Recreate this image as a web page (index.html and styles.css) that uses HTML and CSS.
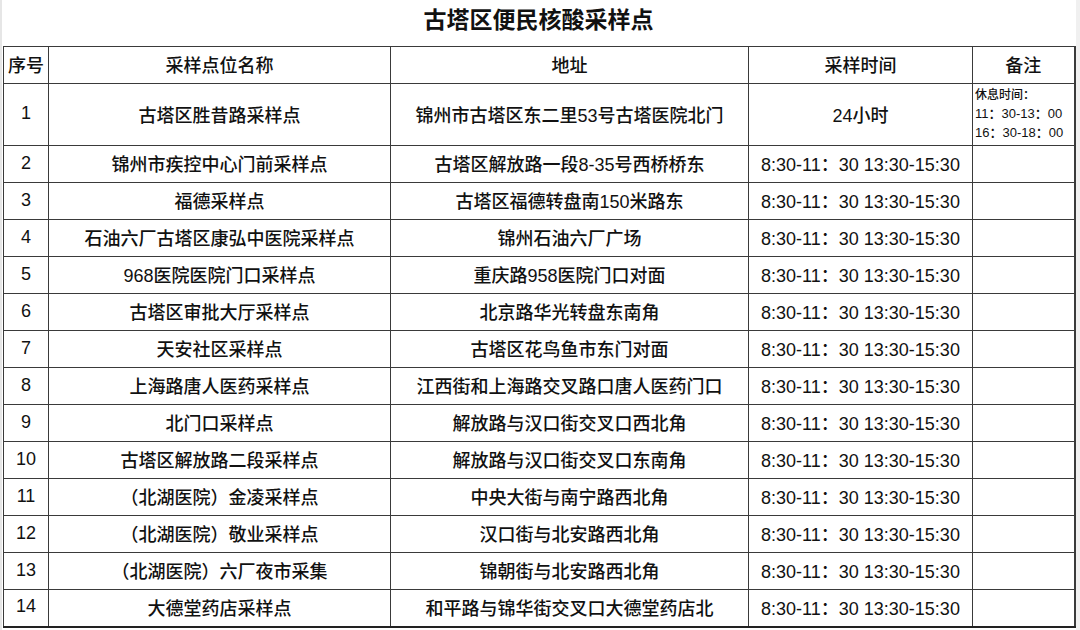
FILE: index.html
```html
<!DOCTYPE html>
<html lang="zh-CN">
<head>
<meta charset="utf-8">
<title>古塔区便民核酸采样点</title>
<link rel="stylesheet" href="styles.css">
</head>
<body>
<div class="page">
  <h1 class="title">古塔区便民核酸采样点</h1>
  <table class="sheet">
    <colgroup>
      <col class="c-no">
      <col class="c-name">
      <col class="c-addr">
      <col class="c-time">
      <col class="c-note">
    </colgroup>
    <thead>
      <tr class="head">
        <th>序号</th><th>采样点位名称</th><th>地址</th><th>采样时间</th><th>备注</th>
      </tr>
    </thead>
    <tbody>
      <tr class="tall">
        <td>1</td><td>古塔区胜昔路采样点</td><td>锦州市古塔区东二里53号古塔医院北门</td><td>24小时</td>
        <td class="note"><div class="note-h">休息时间：</div><div>11：30-13：00</div><div>16：30-18：00</div></td>
      </tr>
      <tr><td>2</td><td>锦州市疾控中心门前采样点</td><td>古塔区解放路一段8-35号西桥桥东</td><td>8:30-11：30 13:30-15:30</td><td></td></tr>
      <tr><td>3</td><td>福德采样点</td><td>古塔区福德转盘南150米路东</td><td>8:30-11：30 13:30-15:30</td><td></td></tr>
      <tr><td>4</td><td>石油六厂古塔区康弘中医院采样点</td><td>锦州石油六厂广场</td><td>8:30-11：30 13:30-15:30</td><td></td></tr>
      <tr><td>5</td><td>968医院医院门口采样点</td><td>重庆路958医院门口对面</td><td>8:30-11：30 13:30-15:30</td><td></td></tr>
      <tr><td>6</td><td>古塔区审批大厅采样点</td><td>北京路华光转盘东南角</td><td>8:30-11：30 13:30-15:30</td><td></td></tr>
      <tr><td>7</td><td>天安社区采样点</td><td>古塔区花鸟鱼市东门对面</td><td>8:30-11：30 13:30-15:30</td><td></td></tr>
      <tr><td>8</td><td>上海路唐人医药采样点</td><td>江西街和上海路交叉路口唐人医药门口</td><td>8:30-11：30 13:30-15:30</td><td></td></tr>
      <tr><td>9</td><td>北门口采样点</td><td>解放路与汉口街交叉口西北角</td><td>8:30-11：30 13:30-15:30</td><td></td></tr>
      <tr><td>10</td><td>古塔区解放路二段采样点</td><td>解放路与汉口街交叉口东南角</td><td>8:30-11：30 13:30-15:30</td><td></td></tr>
      <tr><td>11</td><td>（北湖医院）金凌采样点</td><td>中央大街与南宁路西北角</td><td>8:30-11：30 13:30-15:30</td><td></td></tr>
      <tr><td>12</td><td>（北湖医院）敬业采样点</td><td>汉口街与北安路西北角</td><td>8:30-11：30 13:30-15:30</td><td></td></tr>
      <tr><td>13</td><td>（北湖医院）六厂夜市采集</td><td>锦朝街与北安路西北角</td><td>8:30-11：30 13:30-15:30</td><td></td></tr>
      <tr><td>14</td><td>大德堂药店采样点</td><td>和平路与锦华街交叉口大德堂药店北</td><td>8:30-11：30 13:30-15:30</td><td></td></tr>
    </tbody>
  </table>
</div>
</body>
</html>
```

FILE: styles.css
```css
html, body {
  margin: 0;
  padding: 0;
  background: #fff;
}

body {
  font-family: "Liberation Sans", "Noto Sans CJK SC", sans-serif;
  color: #111;
}

.page {
  width: 1080px;
  height: 630px;
  overflow: hidden;
  padding-left: 3px;
  box-sizing: border-box;
  border-left: 2px solid #e6e6e6;
  border-right: 4px solid #f0f0f0;
}

.title {
  margin: 0;
  height: 46px;
  line-height: 40px;
  font-size: 23px;
  font-weight: bold;
  text-align: center;
  color: #111;
  padding-right: 4px;
}

.sheet {
  width: 1071px;
  table-layout: fixed;
  border-collapse: collapse;
  margin-left: -2px;
}

.c-no { width: 45px; }
.c-name { width: 342px; }
.c-addr { width: 358px; }
.c-time { width: 224px; }
.c-note { width: 102px; }

.sheet th,
.sheet td {
  border: 1px solid #3a3a3a;
  padding: 0 0 2px 0;
  text-align: center;
  vertical-align: middle;
  font-size: 18px;
  font-weight: 500;
  white-space: nowrap;
  color: #111;
}

.sheet tr {
  height: 37px;
}

.sheet tr.tall {
  height: 62px;
}

.sheet th:last-child,
.sheet td:last-child {
  border-right: 2px solid #3a3a3a;
}

.sheet tbody tr:last-child td {
  border-bottom: 2px solid #222;
}

.sheet td.note {
  text-align: left;
  vertical-align: top;
  padding: 3px 0 0 2px;
  font-size: 13px;
  font-weight: 500;
  line-height: 19px;
}

.note-h {
  font-size: 12px;
  line-height: 17px;
}
```
